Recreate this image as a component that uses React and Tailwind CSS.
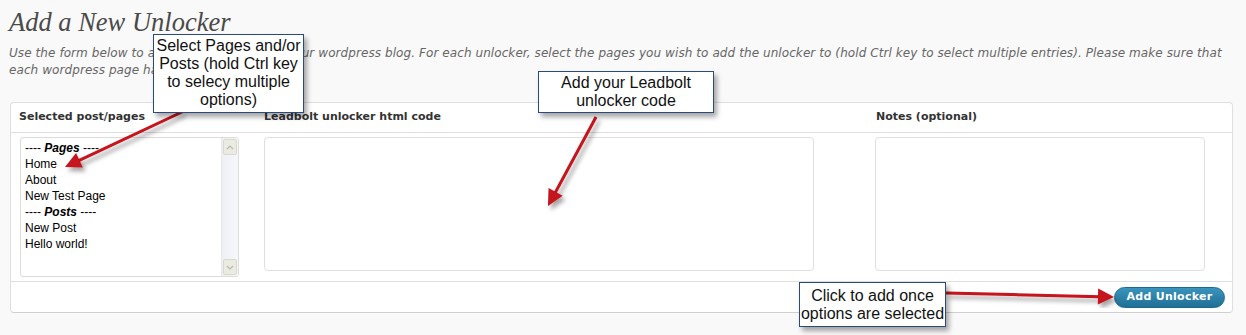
const pageItems = [
  { label: 'Pages', group: true },
  { label: 'Home' },
  { label: 'About' },
  { label: 'New Test Page' },
  { label: 'Posts', group: true },
  { label: 'New Post' },
  { label: 'Hello world!' },
]

function Callout({ className, children }) {
  return (
    <div
      className={
        'absolute bg-white border border-[#2b4a7c] text-[#111] text-center font-["Liberation_Sans",Arial,sans-serif] text-[16px] leading-[18px] shadow-[3px_4px_5px_rgba(0,0,0,0.35)] ' +
        className
      }
    >
      {children}
    </div>
  )
}

function Arrows() {
  const arrows = [
    { x1: 182, y1: 112, x2: 65, y2: 167 },
    { x1: 596, y1: 117, x2: 548, y2: 206 },
    { x1: 946, y1: 293, x2: 1114, y2: 297 },
  ]
  return (
    <svg className="absolute left-0 top-0 pointer-events-none" width="1246" height="335">
      <defs>
        <filter id="sh" x="-20%" y="-20%" width="140%" height="140%">
          <feDropShadow dx="3" dy="4" stdDeviation="2" floodColor="#000" floodOpacity="0.35" />
        </filter>
      </defs>
      {arrows.map((a, i) => {
        const dx = a.x2 - a.x1
        const dy = a.y2 - a.y1
        const len = Math.hypot(dx, dy)
        const ux = dx / len
        const uy = dy / len
        const hl = 16
        const hw = 8
        const bx = a.x2 - ux * hl
        const by = a.y2 - uy * hl
        const p1 = `${bx - uy * hw},${by + ux * hw}`
        const p2 = `${bx + uy * hw},${by - ux * hw}`
        return (
          <g key={i} filter="url(#sh)">
            <line x1={a.x1} y1={a.y1} x2={bx + ux * 2} y2={by + uy * 2} stroke="#c4121a" strokeWidth="3" />
            <polygon points={`${a.x2},${a.y2} ${p1} ${p2}`} fill="#c4121a" />
          </g>
        )
      })}
    </svg>
  )
}

function PageSelect() {
  return (
    <div className="w-[219px] h-[140px] border border-[#dcdcdc] rounded-[3px] bg-white flex overflow-hidden font-['Liberation_Sans',Tahoma,sans-serif] text-[12px] text-black">
      <div className="flex-1 pl-[4px] pt-[2px] leading-[16px]">
        {pageItems.map((item) =>
          item.group ? (
            <div key={item.label}>
              ---- <span className="font-bold italic">{item.label}</span> ----
            </div>
          ) : (
            <div key={item.label}>{item.label}</div>
          )
        )}
      </div>
      <div className="w-[17px] flex flex-col bg-gradient-to-r from-[#eef0f6] to-[#f6f7fb] border-l border-[#e6e8ee]">
        <div className="h-[16px] m-[1px] rounded-[2px] bg-[#ecebe2] border border-[#d9d8cc] flex items-center justify-center">
          <svg width="8" height="5" viewBox="0 0 8 5">
            <path d="M1 4 L4 1 L7 4" fill="none" stroke="#b8b8b0" strokeWidth="1.2" />
          </svg>
        </div>
        <div className="flex-1" />
        <div className="h-[16px] m-[1px] rounded-[2px] bg-[#ecebe2] border border-[#d9d8cc] flex items-center justify-center">
          <svg width="8" height="5" viewBox="0 0 8 5">
            <path d="M1 1 L4 4 L7 1" fill="none" stroke="#b8b8b0" strokeWidth="1.2" />
          </svg>
        </div>
      </div>
    </div>
  )
}

export default function App() {
  return (
    <div className="relative w-[1246px] h-[335px] overflow-hidden bg-[#f9f9f9]">
      <div className="pl-[9px] pt-[7px]">
        <h2 className="font-['Liberation_Serif',Georgia,serif] italic text-[26.5px] leading-[30px] text-[#4a4a4a]">
          Add a New Unlocker
        </h2>
        <p className="mt-[8px] font-['DejaVu_Sans',Verdana,sans-serif] italic text-[12px] leading-[17px] tracking-[0.08px] text-[#666] whitespace-nowrap">
          Use the form below to add a new unlocker to your wordpress blog. For each unlocker, select the pages you wish to add the unlocker to (hold Ctrl key to select multiple entries). Please make sure that
          <br />
          each wordpress page has only one unlocker set.
        </p>
      </div>

      <div className="ml-[10px] mt-[23px] w-[1223px] border border-[#dfdfdf] border-b-[#cfcfcf] rounded-[4px] bg-white font-['DejaVu_Sans',Verdana,sans-serif]">
        <div className="grid grid-cols-[244px_612px_1fr] h-[30px] items-center border-b border-[#dfdfdf] text-[11px] font-bold text-[#333]">
          <div className="pl-[8px]">Selected post/pages</div>
          <div className="pl-[9px]">Leadbolt unlocker html code</div>
          <div className="pl-[9px]">Notes (optional)</div>
        </div>
        <div className="grid grid-cols-[244px_612px_1fr] h-[149px] pt-[4px] border-b border-[#dfdfdf]">
          <div className="pl-[9px]">
            <PageSelect />
          </div>
          <div className="pl-[9px]">
            <div className="w-[550px] h-[134px] border border-[#dfdfdf] rounded-[4px] bg-white" />
          </div>
          <div className="pl-[8px]">
            <div className="w-[330px] h-[134px] border border-[#dfdfdf] rounded-[4px] bg-white" />
          </div>
        </div>
        <div className="h-[30px] flex items-center justify-end pr-[7px]">
          <button className="h-[21px] w-[111px] rounded-full border border-[#1d6a8e] bg-gradient-to-b from-[#3a94bd] to-[#1f6f95] text-white text-[11px] font-bold tracking-[0.3px]">
            Add Unlocker
          </button>
        </div>
      </div>

      <Arrows />

      <Callout className="left-[153px] top-[34px] w-[151px] h-[79px] pt-[2px]">
        Select Pages and/or
        <br />
        Posts (hold Ctrl key
        <br />
        to selecy multiple
        <br />
        options)
      </Callout>
      <Callout className="left-[538px] top-[71px] w-[176px] h-[42px] pt-[2px]">
        Add your Leadbolt
        <br />
        unlocker code
      </Callout>
      <Callout className="left-[799px] top-[282px] w-[147px] h-[45px] pt-[4px]">
        Click to add once
        <br />
        options are selected
      </Callout>
    </div>
  )
}
